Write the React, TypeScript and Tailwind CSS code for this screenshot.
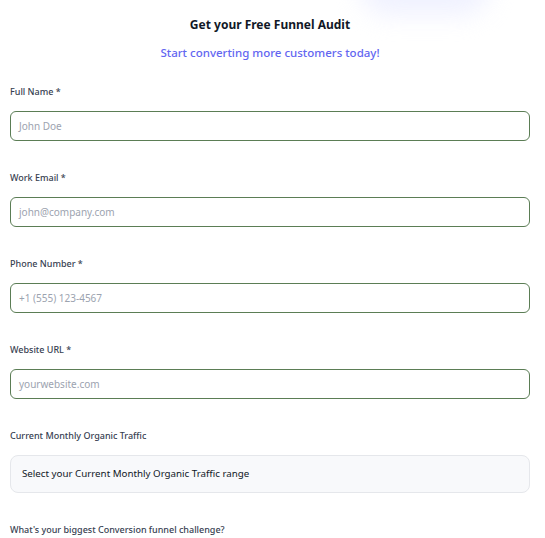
import React from "react";

const font = { fontFamily: '"Noto Sans", "Open Sans", sans-serif' };

function Label({ children }: { children: React.ReactNode }) {
  return <label className="block h-[26px] text-[9px] leading-[14px] font-medium text-[#374151]">{children}</label>;
}

function Field({ label, placeholder }: { label: string; placeholder: string }) {
  return (
    <div className="flex flex-col">
      <Label>{label}</Label>
      <div className="h-[30px] rounded-[6px] border border-[#5b7d55] flex items-center px-[8px] bg-white">
        <span className="text-[10px] text-[#9ca3af]">{placeholder}</span>
      </div>
    </div>
  );
}

export default function App() {
  return (
    <div className="relative w-[545px] h-[538px] overflow-hidden bg-white" style={font}>
      <div className="absolute left-[360px] top-[-40px] w-[130px] h-[55px] rounded-full bg-[#eceeff] blur-[12px] opacity-80" />
      <div className="relative ml-[10px] w-[520px] flex flex-col">
        <div className="flex flex-col items-center pt-[15px]">
          <h1 className="text-[12px] leading-[20px] font-bold text-[#111827]">Get your Free Funnel Audit</h1>
          <p className="mt-[9px] text-[11.5px] leading-[18px] font-medium text-[#6366f1]">Start converting more customers today!</p>
        </div>
        <div className="mt-[23px] flex flex-col gap-[30px]">
          <Field label="Full Name *" placeholder="John Doe" />
          <Field label="Work Email *" placeholder="john@company.com" />
          <Field label="Phone Number *" placeholder="+1 (555) 123-4567" />
          <Field label="Website URL *" placeholder="yourwebsite.com" />
          <div className="flex flex-col">
            <Label>Current Monthly Organic Traffic</Label>
            <div className="h-[38px] rounded-[8px] border border-[#e5e7eb] bg-[#f8f9fb] flex items-center px-[11px]">
              <span className="text-[9.75px] text-[#111827]">Select your Current Monthly Organic Traffic range</span>
            </div>
          </div>
          <div>
            <Label>What's your biggest Conversion funnel challenge?</Label>
          </div>
        </div>
      </div>
    </div>
  );
}
